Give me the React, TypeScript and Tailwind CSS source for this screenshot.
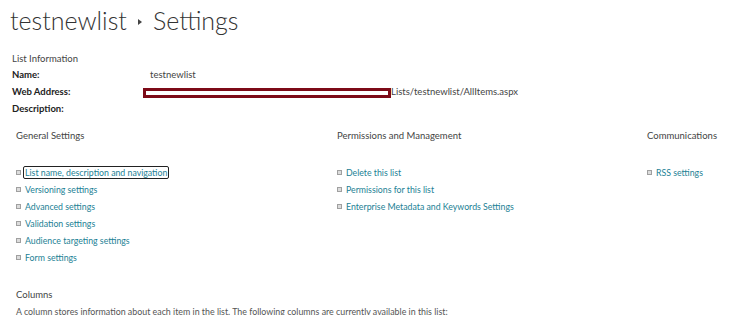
const font = { fontFamily: 'Lato, "Open Sans", sans-serif' };

function Bullet() {
  return <span className="mr-[2px] inline-block h-[5px] w-[5px] shrink-0 border border-[#a0a0a0] bg-[#dcdcdc]" />;
}

function LinkItem({ label, focused }: { label: string; focused?: boolean }) {
  return (
    <div className="flex h-[17px] items-center">
      <Bullet />
      <span
        className={`px-[1px] text-[8.75px] leading-[11px] text-[#1c7f95] ${
          focused ? "rounded-[2px] border border-[#222]" : "border border-transparent"
        }`}
      >
        {label}
      </span>
    </div>
  );
}

function Section({ title, links }: { title: string; links: string[] }) {
  return (
    <div>
      <div className="h-[17px] text-[9.5px] leading-[17px] text-[#444]">{title}</div>
      <div className="mt-[20px]">
        {links.map((l, i) => (
          <LinkItem key={l} label={l} focused={title === "General Settings" && i === 0} />
        ))}
      </div>
    </div>
  );
}

export default function App() {
  return (
    <div className="h-[315px] w-[754px] overflow-hidden bg-white text-[#444]" style={font}>
      <div className="flex items-center pl-[10px] pt-[2px] text-[25px] font-light leading-[36px] text-[#333]">
        <span>testnewlist</span>
        <svg width="6" height="8" viewBox="0 0 6 8" className="ml-[10px] mr-[10px] mt-[3px]">
          <path d="M1 1 L5 4 L1 7 Z" fill="#444" />
        </svg>
        <span>Settings</span>
      </div>

      <div className="pl-[12px] pt-[12px] text-[9.5px]">
        <div className="h-[17px] leading-[17px]">List Information</div>
        <div className="flex h-[17px] items-center">
          <span className="w-[138px] font-bold text-[#222]">Name:</span>
          <span>testnewlist</span>
        </div>
        <div className="flex h-[17px] items-center">
          <span className="w-[131px] font-bold text-[#222]">Web Address:</span>
          <span className="h-[10px] w-[248px] border-[3px] border-[#7d0a18]" />
          <span>Lists/testnewlist/AllItems.aspx</span>
        </div>
        <div className="flex h-[17px] items-center">
          <span className="font-bold text-[#222]">Description:</span>
        </div>
      </div>

      <div className="grid grid-cols-[321px_310px_1fr] pl-[16px] pt-[9px]">
        <Section
          title="General Settings"
          links={[
            "List name, description and navigation",
            "Versioning settings",
            "Advanced settings",
            "Validation settings",
            "Audience targeting settings",
            "Form settings",
          ]}
        />
        <Section
          title="Permissions and Management"
          links={["Delete this list", "Permissions for this list", "Enterprise Metadata and Keywords Settings"]}
        />
        <Section title="Communications" links={["RSS settings"]} />
      </div>

      <div className="pl-[16px] pt-[20px] text-[9.5px]">
        <div className="h-[17px] leading-[17px]">Columns</div>
        <div className="h-[17px] text-[8.85px] leading-[17px] text-[#555]">
          A column stores information about each item in the list. The following columns are currently available in this list:
        </div>
      </div>
    </div>
  );
}
